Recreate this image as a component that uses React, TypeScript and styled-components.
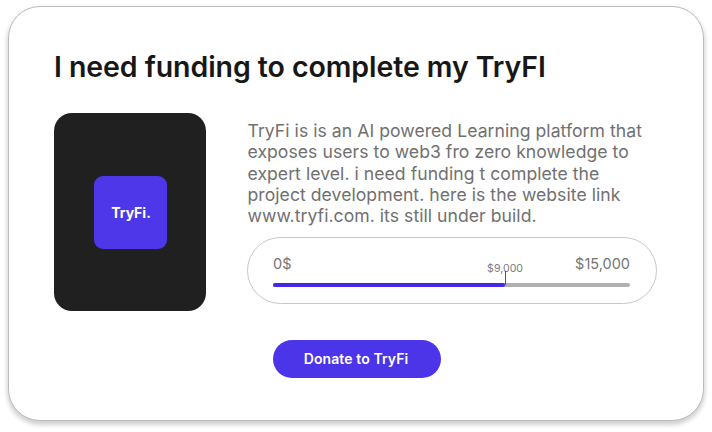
import React from "react";
import styled, { createGlobalStyle } from "styled-components";

const GlobalStyle = createGlobalStyle`
  * { box-sizing: border-box; }
  body { margin: 0; background: #fff; font-family: Inter, sans-serif; overflow: hidden; }
`;

const Card = styled.main`
  width: 696px;
  height: 415px;
  margin: 6px 8px 11px;
  padding: 42px 46px 0 45px;
  border: 1px solid #bcbcbc;
  border-radius: 32px;
  background: #fff;
  box-shadow: 0 3px 4px 1px rgba(0, 0, 0, 0.18);
`;

const Title = styled.h1`
  margin: 0;
  font-size: 28.5px;
  line-height: 36px;
  font-weight: 600;
  letter-spacing: -0.07px;
  color: #171717;
  white-space: nowrap;
`;

const Body = styled.div`
  display: flex;
  gap: 41px;
  margin-top: 28px;
`;

const Cover = styled.div`
  display: flex;
  align-items: center;
  justify-content: center;
  flex: none;
  width: 152px;
  height: 198px;
  border-radius: 18px;
  background: #202020;
`;

const Logo = styled.div`
  display: flex;
  align-items: center;
  justify-content: center;
  width: 73px;
  height: 73px;
  padding-left: 2px;
  border-radius: 9px;
  background: #4e37e8;
  color: #fff;
  font-size: 14px;
  font-weight: 700;
`;

const Details = styled.section`
  width: 410px;
  padding-top: 7px;
`;

const Description = styled.p`
  margin: 0;
  padding-left: 0.5px;
  font-size: 17.6px;
  line-height: 21.3px;
  letter-spacing: 0.045px;
  color: #707070;
  white-space: nowrap;
`;

const Goal = styled.div`
  height: 67px;
  margin-top: 10.5px;
  padding: 16px 26px 0 25px;
  border: 1px solid #c8c8c8;
  border-radius: 34px;
`;

const Amounts = styled.div`
  display: flex;
  justify-content: space-between;
  font-size: 14.5px;
  line-height: 20px;
  color: #757575;
`;

const Track = styled.div`
  position: relative;
  height: 4px;
  margin-top: 9px;
  border-radius: 2px;
  background: #b0b0b0;
`;

const Progress = styled.div`
  width: 65%;
  height: 4px;
  border-radius: 2px;
  background: #4528e5;
`;

const Marker = styled.span`
  position: absolute;
  left: 65%;
  bottom: 2px;
  width: 1px;
  height: 14px;
  background: #555;
`;

const Raised = styled.span`
  position: absolute;
  left: 65%;
  bottom: 11px;
  transform: translateX(-50%);
  font-size: 10.6px;
  line-height: 14px;
  color: #7c7c7c;
`;

const DonateButton = styled.button`
  display: block;
  width: 168px;
  height: 38px;
  margin: 36px 0 0 25.5px;
  padding: 0 1px 0 0;
  border: 0;
  border-radius: 19px;
  background: #4c35e8;
  color: #fff;
  font: 600 14px Inter, sans-serif;
  letter-spacing: 0.1px;
`;

const lines = [
  "TryFi is is an AI powered Learning platform that",
  "exposes users to web3 fro zero knowledge to",
  "expert level. i need funding t complete the",
  "project development. here is the website link",
  "www.tryfi.com. its still under build.",
];

export default function App() {
  return (
    <>
      <GlobalStyle />
      <Card>
        <Title>I need funding to complete my TryFI</Title>
        <Body>
          <Cover><Logo>TryFi.</Logo></Cover>
          <Details>
            <Description>
              {lines.map((line) => <React.Fragment key={line}>{line}<br /></React.Fragment>)}
            </Description>
            <Goal>
              <Amounts><span>0$</span><span>$15,000</span></Amounts>
              <Track>
                <Progress />
                <Raised>$9,000</Raised>
                <Marker />
              </Track>
            </Goal>
            <DonateButton>Donate to TryFi</DonateButton>
          </Details>
        </Body>
      </Card>
    </>
  );
}
